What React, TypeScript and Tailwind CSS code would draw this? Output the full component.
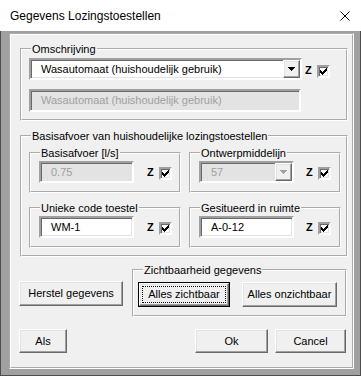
import type { ReactNode } from 'react'

const sunken = 'border-2 border-t-[#a0a0a0] border-l-[#a0a0a0] border-r-white border-b-white shadow-[inset_1px_1px_0_#696969,inset_-1px_-1px_0_#e3e3e3]'
const raised = 'border border-t-white border-l-white border-r-[#696969] border-b-[#696969] shadow-[inset_-1px_-1px_0_#a0a0a0,inset_1px_1px_0_#e3e3e3] bg-[#f0f0f0]'

function Check() {
  const cols = [2, 3, 4, 3, 2, 1, 0]
  return (
    <span className={`block w-[13px] h-[13px] bg-white ${sunken}`}>
      <svg width="9" height="9" viewBox="0 0 9 9" shapeRendering="crispEdges" className="block">
        {cols.map((y, x) => <rect key={x} x={x + 1} y={y + 1} width="1" height="3" fill="#000" />)}
      </svg>
    </span>
  )
}

function ZCheck({ className = '' }: { className?: string }) {
  return (
    <div className={`flex items-start gap-[5px] ${className}`}>
      <span className="text-[11px] leading-[9px] font-bold text-black mt-[1px]">Z</span>
      <Check />
    </div>
  )
}

function Arrow({ color }: { color: string }) {
  return (
    <svg width="7" height="4" viewBox="0 0 7 4" shapeRendering="crispEdges">
      <rect x="0" y="0" width="7" height="1" fill={color} />
      <rect x="1" y="1" width="5" height="1" fill={color} />
      <rect x="2" y="2" width="3" height="1" fill={color} />
      <rect x="3" y="3" width="1" height="1" fill={color} />
    </svg>
  )
}

function Combo({ value, width, disabled = false }: { value: string; width: string; disabled?: boolean }) {
  return (
    <div className={`${width} h-[22px] flex ${sunken} ${disabled ? 'bg-[#e3e3e3]' : 'bg-white'}`}>
      <span className={`flex-1 self-center ml-[10px] whitespace-nowrap ${disabled ? 'text-[#a0a0a0]' : 'text-black'}`}>{value}</span>
      <div className={`w-[17px] h-full flex items-center justify-center ${raised}`}>
        <Arrow color={disabled ? '#a0a0a0' : '#000'} />
      </div>
    </div>
  )
}

function TextBox({ value, className = '', disabled = false }: { value: string; className?: string; disabled?: boolean }) {
  return (
    <div className={`h-[22px] flex items-center ${sunken} ${disabled ? 'bg-[#e3e3e3] text-[#a0a0a0]' : 'bg-white text-black'} ${className}`}>
      <span className="ml-[10px] whitespace-nowrap">{value}</span>
    </div>
  )
}

function Group({ label, className = '', children }: { label: string; className?: string; children: ReactNode }) {
  return (
    <fieldset className={`border-2 border-white [border-style:groove] p-0 m-0 min-w-0 ${className}`}>
      <legend className="ml-[9px] px-[1px] leading-[14px] text-black">{label}</legend>
      {children}
    </fieldset>
  )
}

function Button({ children, className = '' }: { children: ReactNode; className?: string }) {
  return (
    <button className={`h-[24px] flex items-center justify-center text-black ${raised} ${className}`}>{children}</button>
  )
}

export default function App() {
  return (
    <div className="w-[361px] h-[376px] bg-white font-['Liberation_Sans',Arial,sans-serif] text-[11px] flex flex-col">
      <div className="h-[31px] flex items-center justify-between pl-[10px] pr-[11px]">
        <span className="text-[12px] text-black">Gegevens Lozingstoestellen</span>
        <svg width="10" height="10" viewBox="0 0 10 10">
          <path d="M0.5 0.5 L9.5 9.5 M9.5 0.5 L0.5 9.5" stroke="#000" strokeWidth="1" />
        </svg>
      </div>
      <div className="flex-1 bg-[#a0a0a0] border-x border-b border-[#4d4d4d] pl-[8px] pr-[6px] pt-[2px] pb-[6px]">
        <div className="h-full border-2 border-white [border-style:groove] bg-[#f0f0f0] flex flex-col">
          <Group label="Omschrijving" className="ml-[9px] mt-[7px] w-[328px]">
            <div className="pl-[7px] pt-[2px] pb-[7px]">
              <div className="flex items-start">
                <Combo value="Wasautomaat (huishoudelijk gebruik)" width="w-[273px]" />
                <ZCheck className="ml-[3px] mt-[7px]" />
              </div>
              <TextBox value="Wasautomaat (huishoudelijk gebruik)" className="w-[272px] h-[23px] mt-[9px]" disabled />
            </div>
          </Group>

          <Group label="Basisafvoer van huishoudelijke lozingstoestellen" className="ml-[9px] mt-[8px] w-[328px]">
            <div className="pl-[7px] pt-[3px] pb-[7px] grid grid-cols-[152px_152px] gap-x-[8px] gap-y-[8px]">
              <Group label="Basisafvoer [l/s]" className="w-[152px]">
                <div className="flex items-start pl-[8px] pt-[1px] pb-[8px]">
                  <TextBox value="0.75" className="w-[95px]" disabled />
                  <ZCheck className="ml-[13px] mt-[6px]" />
                </div>
              </Group>
              <Group label="Ontwerpmiddelijn" className="w-[152px]">
                <div className="flex items-start pl-[8px] pt-[1px] pb-[8px]">
                  <Combo value="57" width="w-[95px]" disabled />
                  <ZCheck className="ml-[12px] mt-[6px]" />
                </div>
              </Group>
              <Group label="Unieke code toestel" className="w-[152px]">
                <div className="flex items-start pl-[8px] pt-[1px] pb-[8px]">
                  <TextBox value="WM-1" className="w-[95px]" />
                  <ZCheck className="ml-[13px] mt-[6px]" />
                </div>
              </Group>
              <Group label="Gesitueerd in ruimte" className="w-[152px]">
                <div className="flex items-start pl-[8px] pt-[1px] pb-[8px]">
                  <TextBox value="A-0-12" className="w-[95px]" />
                  <ZCheck className="ml-[12px] mt-[6px]" />
                </div>
              </Group>
            </div>
          </Group>

          <div className="flex items-start">
            <Button className="ml-[8px] mt-[24px] w-[104px] h-[25px]">Herstel gegevens</Button>
            <Group label="Zichtbaarheid gegevens" className="ml-[9px] mt-[6px] w-[215px]">
              <div className="flex pl-[4px] pt-[5px] pb-[8px] gap-[12px]">
                <div className="w-[92px] h-[25px] border border-black flex">
                  <div className={`flex-1 flex items-center justify-center p-[2px] ${raised}`}>
                    <span className="w-full h-full flex items-center justify-center outline-1 outline-dotted outline-black -outline-offset-1 text-black">Alles zichtbaar</span>
                  </div>
                </div>
                <Button className="w-[95px] h-[25px]">Alles onzichtbaar</Button>
              </div>
            </Group>
          </div>

          <div className="flex items-start mt-[12px]">
            <Button className="ml-[8px] w-[48px]">Als</Button>
            <Button className="ml-[128px] w-[73px]">Ok</Button>
            <Button className="ml-[7px] w-[71px]">Cancel</Button>
          </div>
        </div>
      </div>
    </div>
  )
}
